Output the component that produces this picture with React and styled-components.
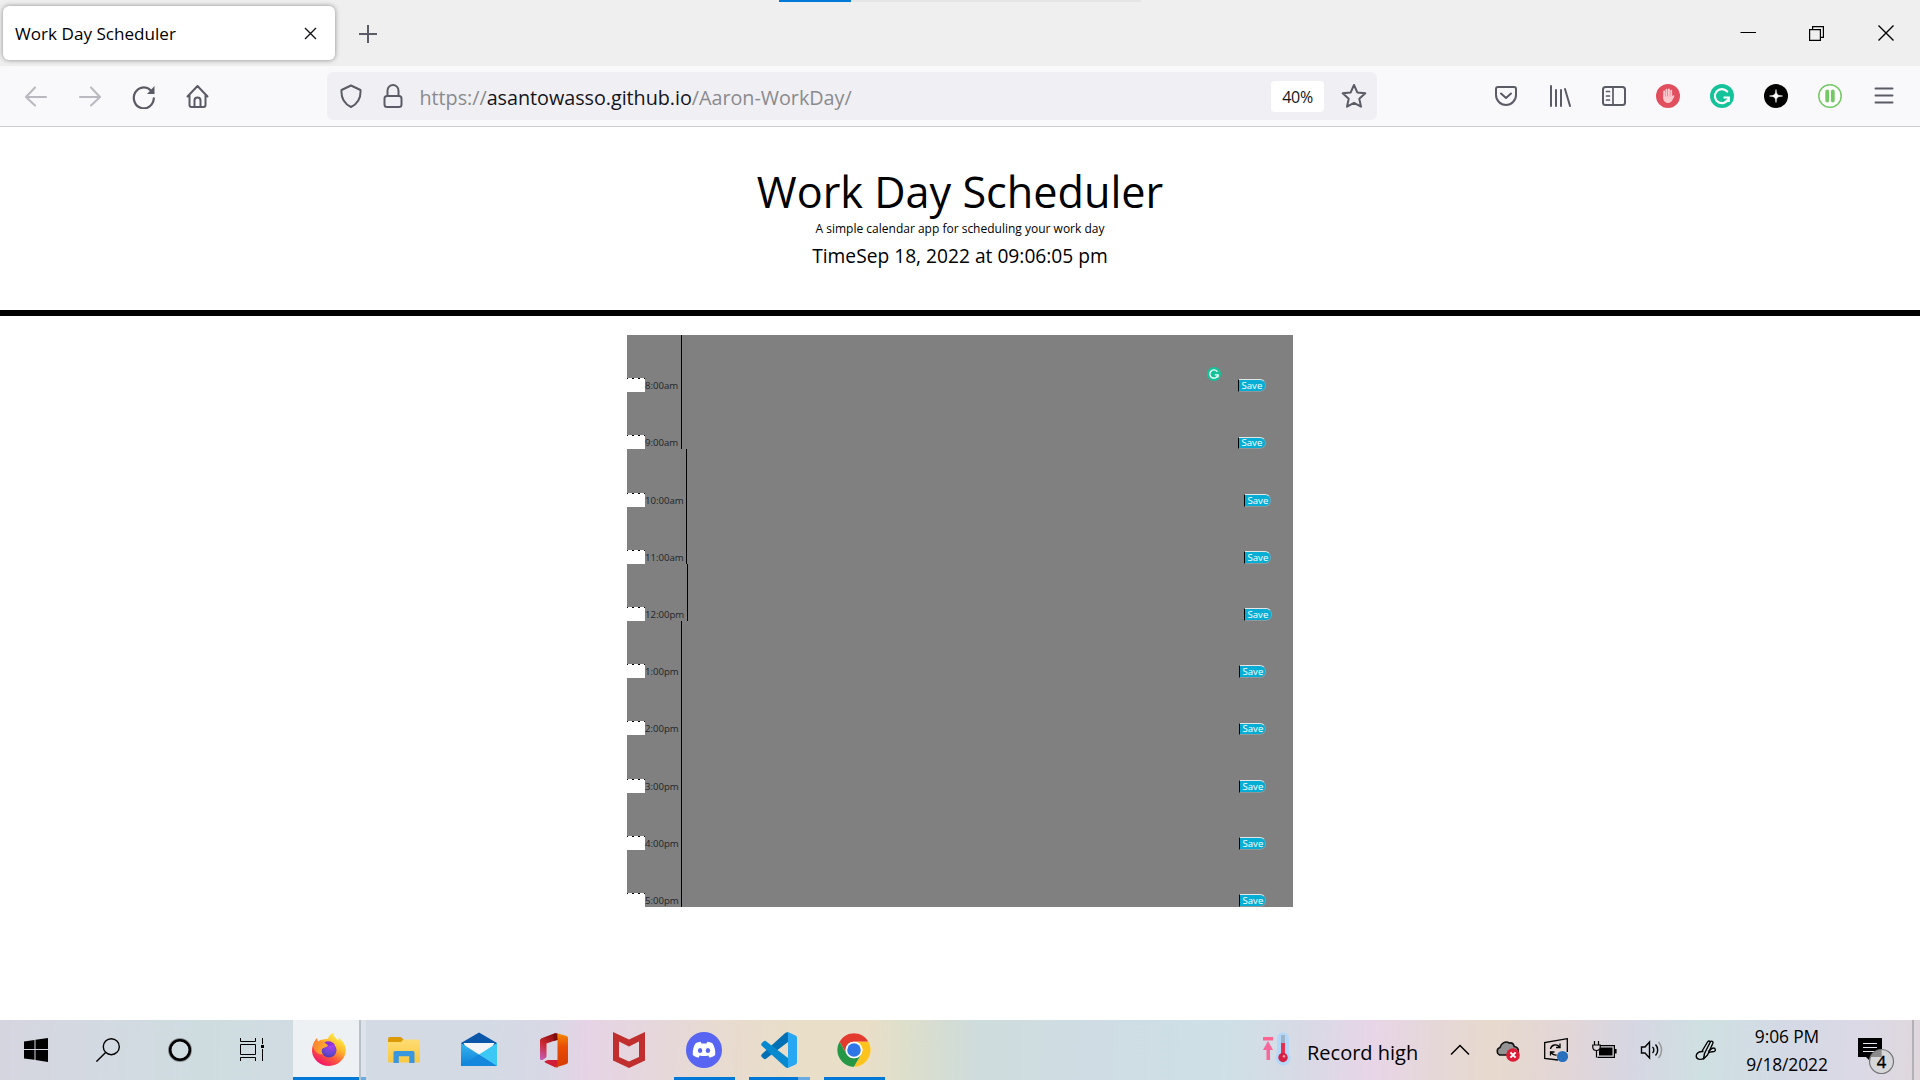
import React from 'react';
import styled, { createGlobalStyle } from 'styled-components';

const Global = createGlobalStyle`
  * { box-sizing: border-box; }
  html, body { margin: 0; padding: 0; background: #fff; }
  body { font-family: "Open Sans", "Noto Sans", sans-serif; color: #000; overflow: hidden; }
  svg { display: block; flex: none; }
`;

const Screen = styled.div`
  width: 1920px;
  height: 1080px;
  display: flex;
  flex-direction: column;
  position: relative;
  background: #fff;
`;

/* ---------- browser chrome ---------- */
const TabStrip = styled.div`
  height: 66px;
  background: #efefef;
  display: flex;
  align-items: flex-start;
  padding: 6px 0 0 3px;
`;
const Tab = styled.div`
  width: 332px;
  height: 54px;
  background: #fff;
  border-radius: 6px;
  box-shadow: 0 0 5px rgba(0, 0, 0, 0.42);
  display: flex;
  align-items: center;
  justify-content: space-between;
  padding: 0 18px 0 12px;
  font-size: 17.1px;
  white-space: nowrap;
`;
const NewTab = styled.div`
  margin: 19px 0 0 24px;
`;
const WindowButtons = styled.div`
  margin-left: auto;
  display: flex;
`;
const WindowButton = styled.div`
  width: 69px;
  height: 54px;
  display: flex;
  align-items: center;
  justify-content: center;
`;
const LoadBar = styled.div`
  position: absolute;
  top: 0;
  left: 779px;
  width: 362px;
  height: 2px;
  background: #e5e5e5;
`;
const LoadFill = styled.div`
  width: 72px;
  height: 2px;
  background: #0078d7;
`;
const Toolbar = styled.div`
  height: 61px;
  background: #f9f9fb;
  border-bottom: 1px solid #cccccf;
  display: flex;
  align-items: center;
  padding: 0 9px;
`;
const IconRow = styled.div`
  display: flex;
`;
const IconSlot = styled.div`
  width: 54px;
  height: 48px;
  display: flex;
  align-items: center;
  justify-content: center;
  color: #5b5b66;
  opacity: ${(p) => (p.$dim ? 0.4 : 1)};
`;
const UrlBar = styled.div`
  width: 1050px;
  height: 48px;
  margin: 0 auto 0 102px;
  background: #f0f0f4;
  border-radius: 6px;
  display: flex;
  align-items: center;
  padding-left: 12px;
  color: #5b5b66;
`;
const UrlIcon = styled.div`
  width: ${(p) => p.$w}px;
  padding-left: ${(p) => p.$shift || 0}px;
  display: flex;
  justify-content: center;
`;
const UrlText = styled.div`
  margin-left: -3.5px;
  flex: 1;
  font-size: 19.8px;
  letter-spacing: -0.04px;
  line-height: 46px;
  padding-top: 3px;
  color: #8a8a8e;
  white-space: nowrap;
  b { font-weight: 400; color: #15141a; }
`;
const Zoom = styled.div`
  width: 53px;
  height: 31px;
  border-radius: 4px;
  background: #fff;
  color: #15141a;
  font-size: 16px;
  letter-spacing: -0.3px;
  line-height: 32px;
  text-align: center;
`;

/* ---------- page ---------- */
const Header = styled.header`
  height: 189px;
  border-bottom: 6px solid #000;
  text-align: center;
  padding-top: 35px;
`;
const Title = styled.h1`
  margin: 0;
  font-weight: 400;
  font-size: 43.2px;
  line-height: 60px;
`;
const Lead = styled.p`
  margin: -1px 0 1px;
  font-size: 12px;
  line-height: 15px;
`;
const Now = styled.p`
  margin: 0;
  font-size: 19.2px;
  line-height: 38px;
`;
const Schedule = styled.main`
  width: 666px;
  margin: 19px auto 0;
  background: #808080;
  position: relative;
`;
const Row = styled.div`
  height: ${(p) => p.$h}px;
  display: flex;
  align-items: flex-end;
`;
const Notch = styled.div`
  width: 18px;
  height: 14px;
  background:
    repeating-linear-gradient(90deg, #000 0 1px, #fff 1px 5px, #000 5px 6px) 0 0 / 100% 1px no-repeat,
    #fff;
`;
const Hour = styled.div`
  width: ${(p) => p.$w}px;
  height: 14px;
  font-size: 9.6px;
  line-height: 16px;
  color: #212529;
  white-space: nowrap;
`;
const Task = styled.div`
  width: 557px;
  align-self: stretch;
  border-left: 1px solid #000;
`;
const Save = styled.button`
  width: ${(p) => p.$w}px;
  height: ${(p) => p.$h}px;
  margin: 0 0 0 ${(p) => p.$x}px;
  padding: 0 0 0 2.5px;
  display: flex;
  align-items: flex-start;
  border: 0;
  border-left: 1px solid #000;
  border-top: 1px solid #e3e7e8;
  border-bottom: 1px solid #8f9799;
  border-right: 1px solid #69a5b5;
  border-radius: 0 6px 6px 0;
  background: #06aed5;
  color: #fff;
  font-family: inherit;
  font-size: 9.6px;
  line-height: ${(p) => (p.$h === 12 ? 10 : 11)}px;
  text-align: left;
`;
const Assist = styled.div`
  position: absolute;
  left: 580px;
  top: 32px;
`;

/* ---------- taskbar ---------- */
const Taskbar = styled.footer`
  margin-top: auto;
  height: 60px;
  display: flex;
  background: linear-gradient(92deg,
    #d5d5e0 0, #d3dae1 110px, #cedce0 200px, #d0dce1 270px, #d3dae4 380px, #d3dae4 480px,
    #d8d8e5 550px, #e6d3e5 588px, #e5d7dc 650px, #e8dbcf 730px, #e9dec8 800px,
    #e9dec8 868px, #dddfcb 905px, #d4dcd3 945px, #cfdcdd 980px, #cfdce4 1100px, #cee0e6 1220px,
    #d7dae5 1300px, #e8d5e7 1375px, #e5d7d9 1430px, #e7d9cd 1490px, #e2d6d8 1570px,
    #d6d6e2 1630px, #cfe0e2 1705px, #d4d9e5 1790px, #dcd9e5 1870px, #dfd7dc 1920px);
`;
const Start = styled.div`
  width: 72px;
  display: flex;
  align-items: center;
  justify-content: center;
`;
const ActiveTile = styled.div`
  width: 66px;
  margin-left: 5px;
  padding: 2px 0 0 5px;
  background: #edf1f4;
  border-bottom: 3px solid #0078d7;
  display: flex;
  align-items: center;
  justify-content: center;
`;
const Stacked = styled.div`
  width: 7px;
  border-left: 2px solid #b8c0c8;
  background: #dde2ec;
  display: flex;
  align-items: flex-end;
`;
const AppButton = styled.div`
  width: 75px;
  display: flex;
  flex-direction: column;
  align-items: center;
  padding: 12px 0 0 1px;
`;
const Running = styled.div`
  width: 61px;
  height: 3px;
  margin-top: 9px;
  background: linear-gradient(90deg, #0078d7 ${(p) => p.$solid}px, #68abe3 ${(p) => p.$solid}px);
`;
const StackedLine = styled.div`
  width: 5px;
  height: 3px;
  background: #68abe3;
`;
const Tray = styled.div`
  margin-left: auto;
  display: flex;
  align-items: center;
`;
const Weather = styled.div`
  width: 174px;
  display: flex;
  align-items: center;
  font-size: 20px;
  line-height: 60px;
  white-space: nowrap;
  gap: 14px;
`;
const WeatherLabel = styled.span`
  padding-top: 6px;
`;
const TraySlot = styled.div`
  width: ${(p) => p.$w || 48}px;
  padding-top: ${(p) => p.$drop || 0}px;
  padding-left: ${(p) => p.$shift || 0}px;
  display: flex;
  justify-content: center;
`;
const Clock = styled.div`
  width: 102px;
  text-align: center;
  font-size: 17.4px;
  line-height: 28px;
  letter-spacing: -0.1px;
`;
const ShowDesktop = styled.div`
  width: 8px;
  height: 60px;
  border-left: 2px solid #b3b1b8;
`;

/* ---------- icons ---------- */
const Line = ({ s = 24, w = 2, children }) => (
  <svg width={s} height={s} viewBox={`0 0 ${s} ${s}`} fill="none" stroke="currentColor" strokeWidth={w} strokeLinecap="round" strokeLinejoin="round">
    {children}
  </svg>
);

const Back = () => <Line><path d="M22 13H2.500M11 3.500L2 13l9 8.500" /></Line>;
const Forward = () => <Line><path d="M2 13h19.500M13 3.500l9 9.500-9 8.500" /></Line>;
const Reload = () => (
  <Line s={26} w={2.200}>
    <path d="M22.800 14.500A10 10.500 0 1 1 19.500 6.300" transform="translate(0 .8)" />
    <path d="M23.500 3v8h-7.500z" fill="currentColor" stroke="none" />
  </Line>
);
const Home = () => (
  <Line s={24}>
    <path d="M1.500 12.500L11.500 2l10 10.500M3.500 11v10a2 2 0 0 0 2 2h12a2 2 0 0 0 2-2V11M8.500 23v-6.500a3 3 0 0 1 6 0V23" />
  </Line>
);
const Shield = () => <Line><path d="M12 1.500l9.500 4.500c.5 7.500-2.500 13.500-9.500 17C5 19.500 2 13.500 2.500 6z" /></Line>;
const Lock = () => (
  <Line><rect x="3.500" y="12" width="17" height="11" rx="2.500" /><path d="M6.500 12V6.500a5.500 5.500 0 0 1 11 0V12" /></Line>
);
const Star = () => (
  <Line s={26}><path d="M13 2l3.300 7.400 8 .8-6 5.500 1.700 8L13 19.800 6 23.700l1.700-8-6-5.500 8-.8z" /></Line>
);
const Pocket = () => (
  <Line><path d="M4 3h16a2 2 0 0 1 2 2v6a10 10 0 0 1-20 0V5a2 2 0 0 1 2-2zM7 9.500l5 4.500 5-4.500" /></Line>
);
const Library = () => <Line><path d="M3 2v20M8 6v16M13 6v16M17 5l5 17" /></Line>;
const Sidebar = () => (
  <Line s={26}>
    <rect x="2" y="4" width="22" height="18" rx="2.500" />
    <path d="M12 4v18M5.500 8.500h3M5.500 13h3M5.500 17h3" strokeWidth="1.700" />
  </Line>
);
const Menu = () => <Line><path d="M3.500 4.500h17M3.500 11.500h17M3.500 18.500h17" /></Line>;
const Blocker = () => (
  <svg width="24" height="24" viewBox="0 0 24 24">
    <circle cx="12" cy="12" r="12" fill="#e14f5f" />
    <g stroke="#fbc9cd" strokeWidth="1.900" strokeLinecap="round">
      <path d="M8.200 7.500V14M10.500 5.800V13M12.900 5.500V13M15.200 6.800V14M17.400 12.200L15 16.500" />
    </g>
    <path d="M7.300 12.500h8.800l.4 2c-1 3-2.300 4.500-4.500 4.500-3 0-4.700-2.500-4.700-4.500z" fill="#fbc9cd" />
  </svg>
);
const GMark = ({ size }) => (
  <svg width={size} height={size} viewBox="0 0 24 24">
    <circle cx="12" cy="12" r="12" fill="#15c39a" />
    <path d="M17.200 7.500A7 7 0 1 0 18.500 14.500" fill="none" stroke="#fff" strokeWidth="2.200" strokeLinecap="round" />
    <path d="M13.500 13.500h5.300v4.500" fill="none" stroke="#fff" strokeWidth="2.200" />
  </svg>
);
const Spark = () => (
  <svg width="24" height="24" viewBox="0 0 24 24">
    <circle cx="12" cy="12" r="12" />
    <path d="M12 5.500c.4 5 1.500 6.100 6.500 6.500-5 .4-6.100 1.500-6.500 6.500-.4-5-1.500-6.100-6.500-6.500 5-.4 6.100-1.500 6.500-6.500z" fill="#fff" stroke="#fff" strokeWidth=".6" />
  </svg>
);
const Pause = () => (
  <svg width="24" height="24" viewBox="0 0 24 24">
    <circle cx="12" cy="12" r="11.200" fill="#fff" stroke="#74c865" strokeWidth="1.500" />
    <path d="M9.200 7.500v9M14.800 7.500v9" stroke="#74c865" strokeWidth="3.800" strokeLinecap="round" />
  </svg>
);

const Windows = () => (
  <svg width="24" height="24" viewBox="0 0 24 24">
    <path d="M0 3.400L10.500 1.900V11H0zM11.500 1.700L24 0v11H11.500zM0 12h10.500v9.800L0 20.400zM11.500 12H24v12l-12.500-1.900z" />
  </svg>
);
const Search = () => (
  <svg width="24" height="24" viewBox="0 0 24 24" fill="none" stroke="#000" strokeWidth="1.400">
    <circle cx="15.300" cy="8.700" r="8" /><path d="M9.600 14.400L.4 23.600" />
  </svg>
);
const Cortana = () => (
  <svg width="24" height="24" viewBox="0 0 24 24" fill="none">
    <circle cx="12" cy="12" r="10.500" stroke="#000" strokeOpacity=".35" strokeWidth="3" />
    <circle cx="12" cy="12" r="9.800" stroke="#000" strokeWidth="2.600" />
  </svg>
);
const TaskView = () => (
  <svg width="24" height="24" viewBox="0 0 24 24" fill="none" stroke="#000">
    <path d="M.5 0v3.500h15V0M.5 6.500h15v10H.5zM.5 23v-3.500h15V23M22.500 0v6M22.500 11v12" />
    <path d="M21 7h3v3h-3z" fill="#000" stroke="none" />
  </svg>
);
const Firefox = () => (
  <svg width="36" height="36" viewBox="0 0 36 36">
    <defs>
      <linearGradient id="fxBody" x1=".8" y1=".1" x2=".25" y2=".95">
        <stop offset="0" stopColor="#fff04a" /><stop offset=".35" stopColor="#ffb52a" />
        <stop offset=".65" stopColor="#ff5a3c" /><stop offset="1" stopColor="#f0146b" />
      </linearGradient>
      <radialGradient id="fxGlobe" cx=".6" cy=".2" r=".9">
        <stop offset="0" stopColor="#b53cf0" /><stop offset=".6" stopColor="#6a48d2" /><stop offset="1" stopColor="#4a3ba8" />
      </radialGradient>
      <linearGradient id="fxHead" x1="0" y1="0" x2="1" y2=".4">
        <stop offset="0" stopColor="#ff7a33" /><stop offset="1" stopColor="#ffb02e" />
      </linearGradient>
    </defs>
    <path d="M23 .5c-1 4 2 5.500 4 8 1-.5.500-2 .5-3 5 4 7.500 8 7.300 13.500A17 16.500 0 0 1 1 19.500C.8 14.500 2.500 10 6 6.500c0 1 .5 2.500 1 3 3-2.500 7-2 10-3 1-3 3-5 6-6z" fill="url(#fxBody)" />
    <circle cx="18" cy="18" r="7.500" fill="url(#fxGlobe)" />
    <path d="M13 10.500c4-2.500 9-1 11 2.500-2-.5-3-.3-4 .5-2 1-5 0-7-3z" fill="#8b35d9" />
    <path d="M2 13c1-3 2-5 4-7 0 1 .5 2.500 1 3.500 3-1 5-.5 7 1.500l3 2.300c-1 2-4 2.200-5.500 3.200-1.300 1.500-1 4 .5 6-6 0-9.500-4-10-9.500z" fill="url(#fxHead)" />
  </svg>
);
const Explorer = () => (
  <svg width="36" height="36" viewBox="0 0 36 36">
    <defs><linearGradient id="fold" x1="0" y1="0" x2="0" y2="1"><stop offset="0" stopColor="#ffdc72" /><stop offset="1" stopColor="#f9c842" /></linearGradient></defs>
    <path d="M2 7a2 2 0 0 1 2-2h11l2.500 2.500V12H2z" fill="#dc9a08" />
    <path d="M2 10h13l2.500-2.500H32a2 2 0 0 1 2 2V29a1.500 1.500 0 0 1-1.500 1.500h-29A1.500 1.500 0 0 1 2 29z" fill="url(#fold)" />
    <path d="M7.500 31V20.500a1.500 1.500 0 0 1 1.500-1.500h18a1.500 1.500 0 0 1 1.500 1.500V31h-5.200v-6.700H12.800V31z" fill="#3a96dd" />
  </svg>
);
const Mail = () => (
  <svg width="36" height="36" viewBox="0 0 36 36">
    <defs><linearGradient id="ml" x1="0" y1="0" x2="0" y2="1"><stop offset="0" stopColor="#35b6f0" /><stop offset="1" stopColor="#0f80d7" /></linearGradient></defs>
    <path d="M0 11L18 .5 36 11v5H0z" fill="#0a56a8" />
    <path d="M2.500 11h31l-8 14h-16z" fill="#f3f5f7" />
    <path d="M0 11l36 23H0z" fill="url(#ml)" />
    <path d="M36 11v23L18 22.500z" fill="#3cc8f5" /><path d="M18 22.500L36 34H0z" fill="#1488dc" />
  </svg>
);
const Office = () => (
  <svg width="36" height="36" viewBox="0 0 36 36">
    <defs>
      <linearGradient id="ofL" x1=".6" y1="0" x2=".2" y2="1"><stop offset="0" stopColor="#8c0d0d" /><stop offset=".5" stopColor="#cc2a34" /><stop offset="1" stopColor="#c65ab0" /></linearGradient>
      <linearGradient id="ofR" x1="0" y1="0" x2="0" y2="1"><stop offset="0" stopColor="#f58800" /><stop offset=".4" stopColor="#e84c05" /><stop offset="1" stopColor="#d63a04" /></linearGradient>
    </defs>
    <path d="M19.500 1L5.500 6.300A2.500 2.500 0 0 0 4 8.600V26.500c0 1.500 1.500 2 3 1.200L9.500 26a2 2 0 0 0 1-1.800V11.500L22 7.500z" fill="url(#ofL)" />
    <path d="M9 29l3-1h10v7.500L18.500 35l-9-4.200c-1-.6-1-1.400-.5-1.800z" fill="#d01d38" />
    <path d="M21.500 1.400l8.500 2.400c1.300.4 2 1.200 2 2.500v23.500c0 1.300-.7 2.100-2 2.500l-9 2.700c-1 .3-2 .3-3 0 2.500-.3 3.500-1.500 3.500-4z" fill="url(#ofR)" />
    <path d="M18.500 1.300l3-.1V8l-4 1z" fill="#7d0c0c" />
  </svg>
);
const McAfee = () => (
  <svg width="36" height="36" viewBox="0 0 36 36">
    <path fillRule="evenodd" d="M2 0l16 7.500L34 0v28.500L18 36 2 28.500zM8 9.500V25l10 4.500L28 25V9.500l-10 5z" fill="#c02e2d" />
  </svg>
);
const Discord = () => (
  <svg width="36" height="36" viewBox="0 0 36 36">
    <circle cx="18" cy="18" r="18" fill="#5865f2" />
    <path d="M14.600 9.800c-2 .3-3.400.8-5 1.500C7.500 14.500 6.500 18 6.800 23c1.800 1.500 3.600 2.300 5.600 2.800l1.400-2.300c2.800.8 5.600.8 8.400 0l1.400 2.300c2-.5 3.800-1.300 5.600-2.800.4-5-.7-8.500-2.800-11.700-1.600-.7-3-1.200-5-1.500l-.9 1.700h-5z" fill="#fff" />
    <ellipse cx="14.100" cy="18.500" rx="2.200" ry="2.500" fill="#5865f2" /><ellipse cx="21.900" cy="18.500" rx="2.200" ry="2.500" fill="#5865f2" />
  </svg>
);
const Code = () => (
  <svg width="36" height="36" viewBox="0 0 36 36">
    <path d="M27 .2V10L5 26.800c-.8.6-1.500.5-2.200-.1L.8 24.900c-.8-.8-.8-1.800 0-2.600L24.500.8c.8-.6 1.500-.8 2.500-.6z" fill="#0070b5" />
    <path d="M27 35.800V26L5 9.200c-.8-.6-1.500-.5-2.200.1L.8 11.100c-.8.8-.8 1.800 0 2.600l23.700 21.500c.8.6 1.500.8 2.500.6z" fill="#0789cf" />
    <path d="M27 0l7.500 3.600c1 .5 1.500 1.300 1.500 2.400v24c0 1.100-.5 1.900-1.500 2.400L27 36z" fill="#28a8f2" />
  </svg>
);
const Chrome = () => (
  <svg width="36" height="36" viewBox="0 0 36 36">
    <circle cx="18" cy="18" r="16.700" fill="#fff" />
    <path d="M3.540 9.650A16.700 16.700 0 0 1 32.460 9.650H18a8.350 8.350 0 0 0-7.230 12.500z" fill="#e33b2e" />
    <path d="M32.460 9.650A16.700 16.700 0 0 1 18 34.700l7.230-12.500A8.350 8.350 0 0 0 18 9.650z" fill="#fcc31e" />
    <path d="M18 34.700A16.700 16.700 0 0 1 3.540 9.650l7.230 12.520a8.350 8.350 0 0 0 14.460 0z" fill="#259745" />
    <circle cx="18" cy="18" r="8.350" fill="#fff" /><circle cx="18" cy="18" r="6.800" fill="#2f77e6" />
  </svg>
);
const Thermo = () => (
  <svg width="31" height="36" viewBox="0 0 31 36">
    <path d="M1 5h10v3.500H1z" fill="#ff6490" />
    <path d="M6 9l5 9H8v10H4.500V18H1z" fill="#f8679a" />
    <path d="M21 .5a6 6 0 0 1 6 6v15a7.500 7.500 0 1 1-12 0v-15a6 6 0 0 1 6-6z" fill="#b4d8fa" />
    <path d="M19 3h4v20h-4z" fill="#9fb4c6" /><path d="M19 11h4v14h-4z" fill="#e5304f" />
    <circle cx="21" cy="25.500" r="4.700" fill="#d42045" /><circle cx="22" cy="24.300" r="1.200" fill="#ff9fb4" />
  </svg>
);
const Chevron = () => <svg width="20" height="12" viewBox="0 0 20 12" fill="none" stroke="#000" strokeWidth="1.500"><path d="M1 10.500l9-9 9 9" /></svg>;
const Cloud = () => (
  <svg width="24" height="24" viewBox="0 0 24 24">
    <path d="M4.500 17a4 4 0 0 1 .3-7.500C6 5 10.500 2.500 14 5c3-.5 4.500 1 5 3.500 3.500.5 4.500 3 4 5.500l-2 3z" transform="translate(-.8 0)" fill="#939393" stroke="#111" strokeWidth="1.600" />
    <circle cx="17" cy="17" r="6.800" fill="#dd1c36" /><path d="M14.400 14.400l5.200 5.200M19.600 14.400l-5.200 5.200" stroke="#fff" strokeWidth="2" />
  </svg>
);
const Sync = () => (
  <svg width="24" height="24" viewBox="0 0 24 24" fill="none" stroke="#000" strokeWidth="1.300">
    <path d="M14 22L.7 20.500V4.500L23.300.7V14" />
    <path d="M6.500 11a5 5 0 0 1 9-2M16 5.500v4h-4M6.500 17.500v-3.500h4M7 14.500c1.500 2 3.500 2.800 5.500 2.500" />
    <circle cx="18.500" cy="18.500" r="5.600" fill="#2870bd" stroke="none" />
  </svg>
);
const Battery = () => (
  <svg width="25" height="18" viewBox="0 0 25 18" fill="none" stroke="#000" strokeWidth="1.200">
    <path d="M8 4.600h14.400v11.800H5.500" /><path d="M8.500 6.500H20.500v8H7V10z" fill="#000" stroke="none" /><path d="M23.800 8v4.500" strokeWidth="1.600" />
    <path d="M2.500 0v4M6.500 0v4M.8 4h7.400v2.500C8 8.500 6.500 9.500 4.500 9.500S1 8.500.8 6.500zM4.500 9.500v7" />
  </svg>
);
const Volume = () => (
  <svg width="24" height="20" viewBox="0 0 24 20" fill="none" stroke="#000" strokeWidth="1.400">
    <path d="M1.500 7H5l4.500-5v16L5 13H1.500z" /><path d="M12.500 7a4 4 0 0 1 0 6M15.500 4.500a8 8 0 0 1 0 11" /><path d="M18.500 2a12 12 0 0 1 0 16" stroke="#999" />
  </svg>
);
const Pen = () => (
  <svg width="22" height="22" viewBox="0 0 22 22" fill="none" stroke="#000" strokeWidth="1.400" strokeLinejoin="round">
    <path d="M8.500 20l1-5.500L15.300 3c.9-1.700 3.300-.6 2.600 1.200L12.500 16z" />
    <path d="M8.500 12.500C4 12 1.200 14.500 1.200 17c0 3.200 4.300 4.300 7.300 2.500M6.500 13L12.500 3c.8-1.300 1.800-1.300 2.800-.3M13.500 12.500c1.500-1.500 3.500-3.500 5-3.500 2 0 2.500 2.500 1 3.300-1.700.8-3.500 0-6 1.500" />
  </svg>
);
const Notice = () => (
  <svg width="37" height="37" viewBox="0 0 37 37">
    <path d="M0 0h24v19H13v5l-5-5H0z" /><path d="M5 5.500h14M5 9.500h14M5 13.500h14" stroke="#e8e6ee" strokeWidth="1.200" />
    <circle cx="23.500" cy="23.500" r="12" fill="#d6d6d8" fillOpacity=".92" stroke="#77777a" strokeWidth="1.200" />
    <path d="M12.500 19a12 12 0 0 1 11-7.500v7.500z" fill="#777" fillOpacity=".75" />
    <text x="23.500" y="29.500" textAnchor="middle" fontFamily="Open Sans" fontSize="16.500" stroke="#000" strokeWidth=".4">4</text>
  </svg>
);

const rows = [
  { t: '8:00am', h: 57, w: 36, b: 28, bh: 13 },
  { t: '9:00am', h: 57, w: 36, b: 28, bh: 12 },
  { t: '10:00am', h: 58, w: 41, b: 27, bh: 13, x: 1 },
  { t: '11:00am', h: 57, w: 41, b: 27, bh: 13, x: 1 },
  { t: '12:00pm', h: 57, w: 42, b: 28, bh: 13 },
  { t: '1:00pm', h: 57, w: 36, b: 27, bh: 13, x: 1 },
  { t: '2:00pm', h: 57, w: 36, b: 27, bh: 12, x: 1 },
  { t: '3:00pm', h: 58, w: 36, b: 27, bh: 13, x: 1 },
  { t: '4:00pm', h: 57, w: 36, b: 27, bh: 13, x: 1 },
  { t: '5:00pm', h: 57, w: 36, b: 27, bh: 13, x: 1 },
];

const apps = [
  { icon: Explorer }, { icon: Mail }, { icon: Office }, { icon: McAfee },
  { icon: Discord, solid: 61 }, { icon: Code, solid: 49 }, { icon: Chrome, solid: 61 },
];

export default function App() {
  return (
    <Screen>
      <Global />
      <TabStrip>
        <Tab>
          Work Day Scheduler
          <svg width="13" height="13" viewBox="0 0 13 13" stroke="#15141a" strokeWidth="1.400"><path d="M1 1l11 11M12 1L1 12" /></svg>
        </Tab>
        <NewTab><svg width="18" height="18" viewBox="0 0 18 18" stroke="#5b5b66" strokeWidth="2"><path d="M9 0v18M0 9h18" /></svg></NewTab>
        <WindowButtons>
          <WindowButton><svg width="16" height="16" viewBox="0 0 16 16" stroke="#000"><path d="M.5 7.500h15.500" /></svg></WindowButton>
          <WindowButton><svg width="15" height="15" viewBox="0 0 15 15" fill="none" stroke="#000" strokeWidth="1.200"><path d="M.6 3.600h10.800v10.800H.6zM3.600 3.600v-3h10.800v10.800h-3" /></svg></WindowButton>
          <WindowButton><svg width="16" height="16" viewBox="0 0 16 16" stroke="#000" strokeWidth="1.400"><path d="M.5.500l15 15M15.500.500l-15 15" /></svg></WindowButton>
        </WindowButtons>
      </TabStrip>
      <LoadBar><LoadFill /></LoadBar>
      <Toolbar>
        <IconRow>
          <IconSlot $dim><Back /></IconSlot>
          <IconSlot $dim><Forward /></IconSlot>
          <IconSlot><Reload /></IconSlot>
          <IconSlot><Home /></IconSlot>
        </IconRow>
        <UrlBar>
          <UrlIcon $w={24}><Shield /></UrlIcon>
          <UrlIcon $w={60}><Lock /></UrlIcon>
          <UrlText>https://<b>asantowasso.github.io</b>/Aaron-WorkDay/</UrlText>
          <Zoom>40%</Zoom>
          <UrlIcon $w={53} $shift={7}><Star /></UrlIcon>
        </UrlBar>
        <IconRow>
          {[Pocket, Library, Sidebar, Blocker].map((I, i) => <IconSlot key={i}><I /></IconSlot>)}
          <IconSlot><GMark size={24} /></IconSlot>
          {[Spark, Pause, Menu].map((I, i) => <IconSlot key={i}><I /></IconSlot>)}
        </IconRow>
      </Toolbar>

      <Header>
        <Title>Work Day Scheduler</Title>
        <Lead>A simple calendar app for scheduling your work day</Lead>
        <Now>TimeSep 18, 2022 at 09:06:05 pm</Now>
      </Header>
      <Schedule>
        {rows.map((r) => (
          <Row key={r.t} $h={r.h}>
            <Notch />
            <Hour $w={r.w}>{r.t}</Hour>
            <Task />
            <Save $w={r.b} $h={r.bh} $x={r.x || 0}>Save</Save>
          </Row>
        ))}
        <Assist><GMark size={14} /></Assist>
      </Schedule>

      <Taskbar>
        <Start><Windows /></Start>
        <Start><Search /></Start>
        <Start><Cortana /></Start>
        <Start><TaskView /></Start>
        <ActiveTile><Firefox /></ActiveTile>
        <Stacked><StackedLine /></Stacked>
        {apps.map(({ icon: Icon, solid }, i) => (
          <AppButton key={i}><Icon />{solid && <Running $solid={solid} />}</AppButton>
        ))}
        <Tray>
          <Weather><Thermo /><WeatherLabel>Record high</WeatherLabel></Weather>
          <TraySlot><Chevron /></TraySlot>
          <TraySlot><Cloud /></TraySlot>
          <TraySlot><Sync /></TraySlot>
          <TraySlot><Battery /></TraySlot>
          <TraySlot><Volume /></TraySlot>
          <TraySlot $w={60}><Pen /></TraySlot>
          <Clock>9:06 PM<br />9/18/2022</Clock>
          <TraySlot $w={74} $drop={12} $shift={3}><Notice /></TraySlot>
          <ShowDesktop />
        </Tray>
      </Taskbar>
    </Screen>
  );
}
